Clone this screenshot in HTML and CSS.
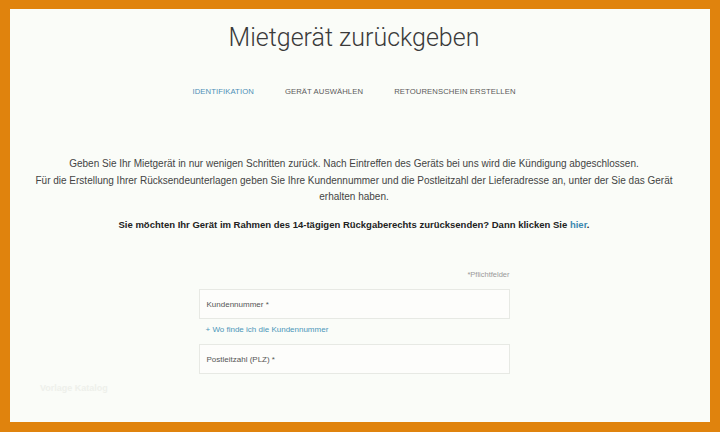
FILE: index.html
```html
<!DOCTYPE html>
<html lang="de">
<head>
<meta charset="utf-8">
<title>Mietgerät zurückgeben</title>
<link rel="stylesheet" href="styles.css">
</head>
<body>
<div class="frame">
  <h1 class="title">Mietgerät zurückgeben</h1>
  <nav class="steps">
    <span class="step active">Identifikation</span>
    <span class="step">Gerät auswählen</span>
    <span class="step">Retourenschein erstellen</span>
  </nav>
  <div class="intro">
    <p>Geben Sie Ihr Mietgerät in nur wenigen Schritten zurück. Nach Eintreffen des Geräts bei uns wird die Kündigung abgeschlossen.<br>Für die Erstellung Ihrer Rücksendeunterlagen geben Sie Ihre Kundennummer und die Postleitzahl der Lieferadresse an, unter der Sie das Gerät<br>erhalten haben.</p>
    <p class="strong">Sie möchten Ihr Gerät im Rahmen des 14-tägigen Rückgaberechts zurücksenden? Dann klicken Sie <a class="link" href="#">hier</a>.</p>
  </div>
  <form class="form">
    <div class="required">*Pflichtfelder</div>
    <div class="field">Kundennummer *</div>
    <a class="help" href="#">+ Wo finde ich die Kundennummer</a>
    <div class="field">Postleitzahl (PLZ) *</div>
  </form>
  <div class="watermark">Vorlage Katalog</div>
</div>
</body>
</html>
```
FILE: styles.css
```css
html, body {
  margin: 0;
  padding: 0;
  background: #e0830d;
}
body {
  padding: 9px 10px 10px 10px;
  height: 432px;
  box-sizing: border-box;
  font-family: "Liberation Sans", Arial, sans-serif;
}
.frame {
  background: #fafcf8;
  height: 413px;
  padding-right: 12px;
  box-sizing: border-box;
  display: flex;
  flex-direction: column;
  align-items: center;
  position: relative;
}
.title {
  margin: 14px 0 0 0;
  font-family: Roboto, "Liberation Sans", sans-serif;
  font-weight: 300;
  font-size: 25px;
  line-height: 30px;
  color: #3a3a3a;
}
.steps {
  margin-top: 34px;
  display: flex;
  gap: 31px;
  font-size: 7.7px;
  text-transform: uppercase;
  letter-spacing: 0.1px;
  color: #5a5a5a;
}
.step.active {
  color: #4e8fb7;
}
.intro {
  margin-top: 60px;
  text-align: center;
  font-size: 10px;
  line-height: 16.5px;
  color: #444;
}
.intro p {
  margin: 0;
}
.intro .strong {
  margin-top: 11px;
  font-size: 9.5px;
  font-weight: bold;
  color: #222;
}
.link {
  color: #3c88b0;
  text-decoration: none;
}
.form {
  margin-top: 37px;
  width: 311px;
  display: flex;
  flex-direction: column;
}
.required {
  align-self: flex-end;
  font-size: 7.5px;
  color: #9a9a9a;
  line-height: 10px;
}
.field {
  height: 30px;
  box-sizing: border-box;
  border: 1px solid #e7e9e4;
  background: #fdfdfb;
  font-size: 8px;
  color: #555;
  padding: 0 7px;
  display: flex;
  align-items: center;
}
.required + .field {
  margin-top: 9px;
}
.help {
  margin: 6px 0 0 7px;
  line-height: 10px;
  font-size: 8px;
  color: #4a96b8;
  text-decoration: none;
}
.help + .field {
  margin-top: 9px;
}
.watermark {
  position: absolute;
  left: 30px;
  top: 374px;
  font-size: 9px;
  font-weight: bold;
  color: #eef0eb;
}
```
